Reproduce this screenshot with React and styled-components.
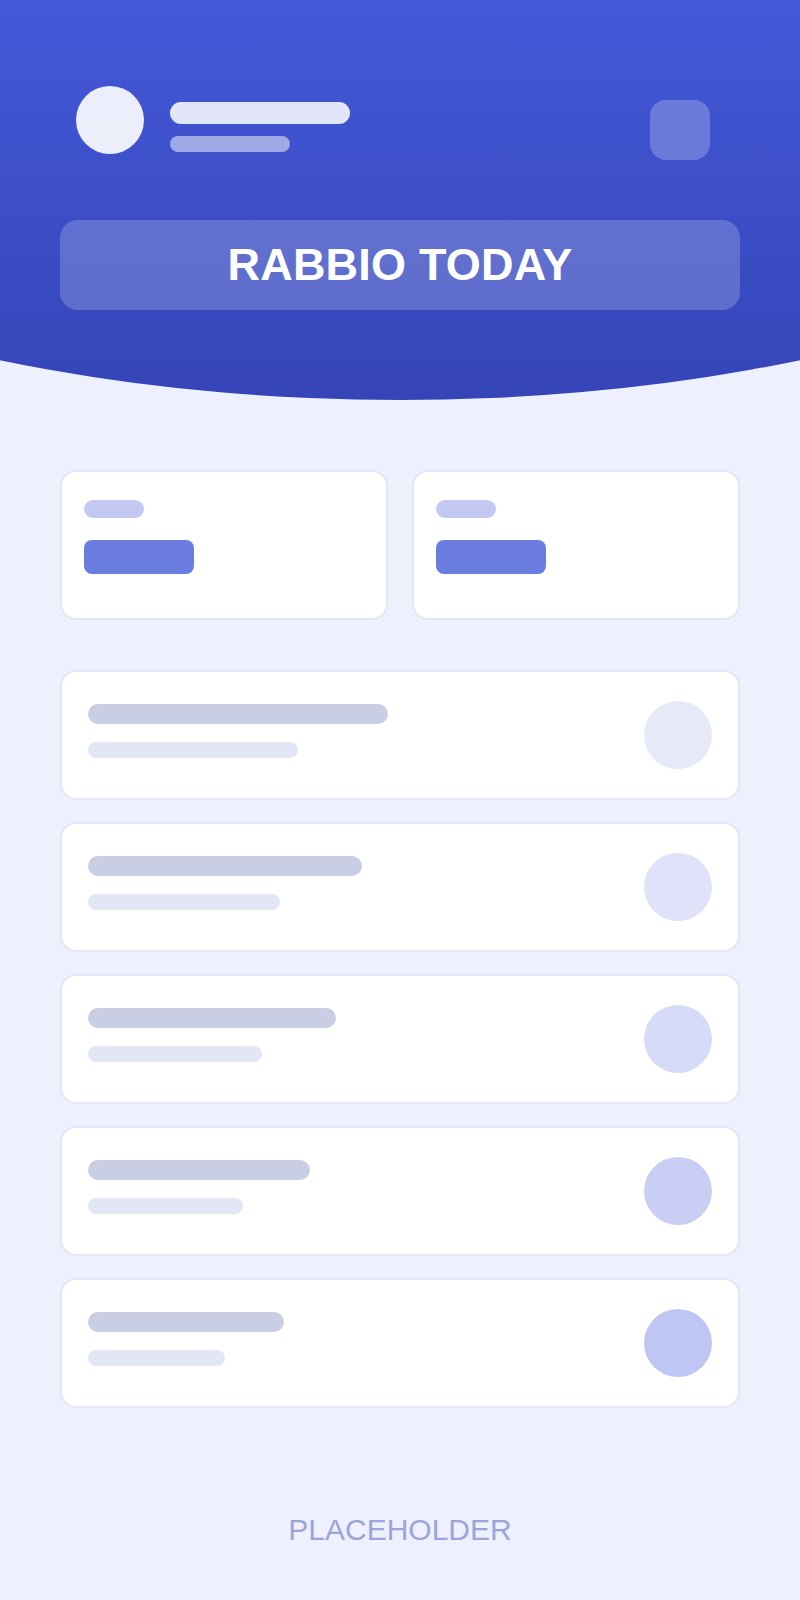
import React from 'react';
import styled, { createGlobalStyle } from 'styled-components';

const GlobalStyle = createGlobalStyle`
  * { box-sizing: border-box; }
  body {
    margin: 0;
    background: #eef1fd;
    font-family: "Liberation Sans", Arial, sans-serif;
  }
`;

const Page = styled.div`
  width: 800px;
  min-height: 1600px;
  background: #eef1fd;
  display: flex;
  flex-direction: column;
`;

const Header = styled.header`
  height: 400px;
  background: linear-gradient(180deg, #4559d9 0%, #3a4dc4 60%, #3545b8 100%);
  clip-path: ellipse(115% 100% at 50% 0%);
  padding: 86px 60px 0 60px;
  display: flex;
  flex-direction: column;
`;

const TopBar = styled.div`
  display: flex;
  align-items: flex-start;
  justify-content: space-between;
  padding: 0 30px 0 16px;
`;

const Profile = styled.div`
  display: flex;
  align-items: flex-start;
  gap: 26px;
`;

const Avatar = styled.div`
  width: 68px;
  height: 68px;
  border-radius: 50%;
  background: rgba(255, 255, 255, 0.9);
`;

const Lines = styled.div`
  display: flex;
  flex-direction: column;
  gap: 12px;
  margin-top: 16px;
`;

const Line = styled.div`
  width: ${p => p.$w}px;
  height: ${p => p.$h}px;
  border-radius: ${p => p.$h / 2}px;
  background: ${p => p.$c};
`;

const IconButton = styled.div`
  width: 60px;
  height: 60px;
  border-radius: 16px;
  background: rgba(255, 255, 255, 0.23);
  margin-top: 14px;
`;

const Banner = styled.div`
  margin-top: 60px;
  height: 90px;
  border-radius: 18px;
  background: rgba(255, 255, 255, 0.2);
  display: flex;
  align-items: center;
  justify-content: center;
  color: #ffffff;
  font-weight: 700;
  font-size: 45px;
  letter-spacing: 0.2px;
`;

const Content = styled.main`
  padding: 70px 60px 0 60px;
  display: flex;
  flex-direction: column;
`;

const Stats = styled.div`
  display: grid;
  grid-template-columns: 1fr 1fr;
  gap: 24px;
`;

const StatCard = styled.div`
  height: 150px;
  background: #ffffff;
  border: 2px solid #e3e6f6;
  border-radius: 16px;
  padding: 28px 22px;
  display: flex;
  flex-direction: column;
  gap: 22px;
`;

const Pill = styled.div`
  width: ${p => p.$w}px;
  height: ${p => p.$h}px;
  border-radius: ${p => p.$r}px;
  background: ${p => p.$c};
`;

const List = styled.div`
  margin-top: 50px;
  display: flex;
  flex-direction: column;
  gap: 22px;
`;

const Row = styled.div`
  height: 130px;
  background: #ffffff;
  border: 2px solid #e3e6f6;
  border-radius: 16px;
  padding: 0 26px;
  display: flex;
  align-items: center;
  justify-content: space-between;
`;

const RowText = styled.div`
  display: flex;
  flex-direction: column;
  gap: 18px;
  padding-bottom: 8px;
`;

const Dot = styled.div`
  width: 68px;
  height: 68px;
  border-radius: 50%;
  background: ${p => p.$c};
`;

const Footer = styled.footer`
  margin-top: 102px;
  text-align: center;
  color: #9aa5de;
  font-size: 30px;
  line-height: 40px;
`;

const rows = [
  { w: 300, c: '#e6e9f8' },
  { w: 274, c: '#dfe2f8' },
  { w: 248, c: '#d6dbf7' },
  { w: 222, c: '#c9cef5' },
  { w: 196, c: '#c0c6f3' },
];

export default function App() {
  return (
    <>
      <GlobalStyle />
      <Page>
        <Header>
          <TopBar>
            <Profile>
              <Avatar />
              <Lines>
                <Line $w={180} $h={22} $c="rgba(255,255,255,0.85)" />
                <Line $w={120} $h={16} $c="rgba(255,255,255,0.5)" />
              </Lines>
            </Profile>
            <IconButton />
          </TopBar>
          <Banner>RABBIO TODAY</Banner>
        </Header>

        <Content>
          <Stats>
            {[0, 1].map(i => (
              <StatCard key={i}>
                <Pill $w={60} $h={18} $r={9} $c="#c3c9f3" />
                <Pill $w={110} $h={34} $r={8} $c="#6b7ddf" />
              </StatCard>
            ))}
          </Stats>

          <List>
            {rows.map((r, i) => (
              <Row key={i}>
                <RowText>
                  <Line $w={r.w} $h={20} $c="#c9cee4" />
                  <Line $w={Math.round(r.w * 0.7)} $h={16} $c="#e3e6f6" />
                </RowText>
                <Dot $c={r.c} />
              </Row>
            ))}
          </List>

          <Footer>PLACEHOLDER</Footer>
        </Content>
      </Page>
    </>
  );
}
